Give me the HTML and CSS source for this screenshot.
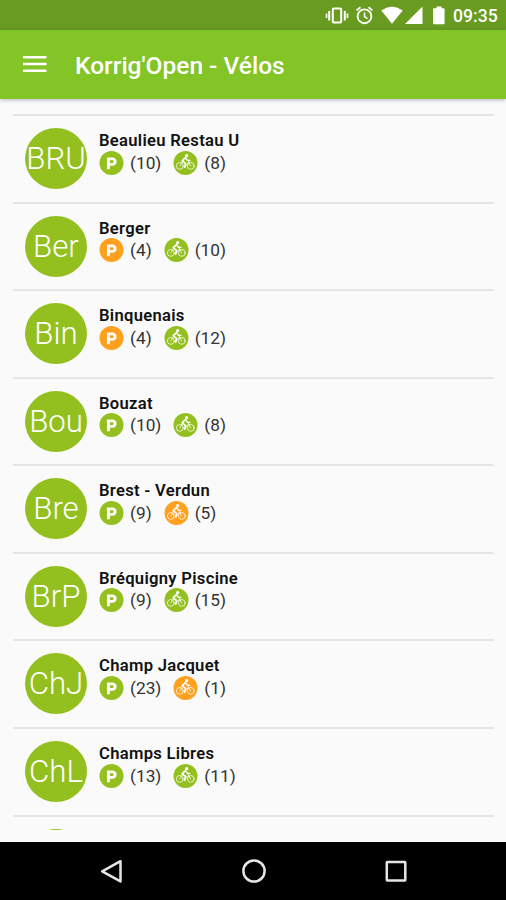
FILE: index.html
```html
<!DOCTYPE html>
<html lang="fr">
<head>
<meta charset="utf-8">
<title>Korrig'Open - Vélos</title>
<link rel="stylesheet" href="styles.css">
</head>
<body>
<svg class="defs" width="0" height="0" aria-hidden="true">
  <symbol id="parking" viewBox="0 0 24 24">
    <circle cx="12" cy="12" r="12"/>
    <path d="M8.900 18.200V7.900h4a2.750 2.750 0 0 1 0 5.500H8.900" fill="none" stroke="#fff" stroke-width="2.900"/>
  </symbol>
  <symbol id="bike" viewBox="0 0 24 24">
    <circle cx="12" cy="12" r="12"/>
    <g fill="none" stroke="#fff" stroke-linecap="round" stroke-linejoin="round">
      <circle cx="6.300" cy="14.900" r="3.400" stroke-width=".9" stroke-opacity=".85"/>
      <circle cx="17.300" cy="14.900" r="3.400" stroke-width=".9" stroke-opacity=".85"/>
      <path d="M11.800 6.700 8.700 9.900l3.300 2.500-.8 3.700" stroke-width="1.700"/>
      <path d="m12.200 7 1.900 2.400h2.300" stroke-width="1.300"/>
      <path d="m6.300 14.900 2.200-3.600m2.700 4.700 3.600-4.700m.1-1.300 2.100 4.900" stroke-width=".8"/>
    </g>
    <circle cx="13.200" cy="4.700" r="1.600" fill="#fff"/>
  </symbol>
</svg>
<div class="screen">
  <div class="status">
    <svg class="status-icons" width="126" height="30" viewBox="0 0 126 30">
      <g fill="none" stroke="#fff">
        <rect x="7.800" y="8.500" width="8.400" height="14" rx="1" stroke-width="2"/>
        <path d="M4.200 11v9.500M19.800 11v9.500" stroke-width="2"/>
        <path d="M1.500 13.500v4.500M22.500 13.500v4.500" stroke-width="1.600"/>
        <circle cx="39.500" cy="16.300" r="6.900" stroke-width="1.900"/>
        <path d="M39.500 12.400v4.300l3 1.900" stroke-width="1.500"/>
        <path d="m31.500 10.400 4-3.200M47.500 10.400l-4-3.200" stroke-width="1.800"/>
      </g>
      <g fill="#fff">
        <path d="M56.300 10.600Q67 2.800 77.700 10.600L67 23.800Z"/>
        <path d="M97.500 6.500v17.500H80Z"/>
        <path d="M109.100 8.200h2.500V6.500h5v1.700h2.200q.8 0 .8.800v14.200q0 1-1 1h-9.600q-1 0-1-1V9q0-.8 1.100-.8Z"/>
      </g>
    </svg>
    <span class="clock">09:35</span>
  </div>
  <header class="toolbar">
    <svg class="menu" width="24" height="18" viewBox="0 0 24 18"><path d="M0 2.200h23.500M0 9h23.500M0 15.800h23.500" stroke="#fff" stroke-width="2.500"/></svg>
    <h1>Korrig'Open - Vélos</h1>
  </header>
  <main class="list" id="list"></main>
  <nav class="navbar">
    <svg width="24" height="26" viewBox="0 0 24 26"><path d="M20.500 3.200v20.200L2.200 13.300Z"/></svg>
    <svg width="26" height="26" viewBox="0 0 26 26"><circle cx="13" cy="13" r="10.600"/></svg>
    <svg width="24" height="26" viewBox="0 0 24 26"><rect x="2.800" y="3.900" width="18.500" height="18.500" rx=".5"/></svg>
  </nav>
</div>
<script src="app.js"></script>
</body>
</html>
```
FILE: styles.css
```css
* { box-sizing: border-box; }
body { margin: 0; background: #fafafa; font-family: Roboto, sans-serif; }
.defs { display: block; width: 0; height: 0; }
.screen { width: 506px; height: 900px; display: flex; flex-direction: column; overflow: hidden; }
.status { height: 30px; flex: none; display: flex; justify-content: flex-end; align-items: center; padding-right: 9px; gap: 2px; background: #689b1f; color: #fff; }
.clock { width: 44px; font-size: 17.600px; line-height: 30px; font-weight: 500; padding-top: 2px; white-space: nowrap; }
.toolbar { height: 69px; flex: none; display: flex; align-items: center; gap: 28px; padding: 2px 23px 0; background: #83c427; color: #fff; box-shadow: 0 1px 4px rgba(60, 60, 90, .35); }
.menu { display: block; margin-bottom: 3px; }
.toolbar h1 { margin: 0; font-size: 24.500px; font-weight: 500; line-height: 32px; white-space: nowrap; }
.list { height: 716px; flex: none; margin-top: 15px; margin-bottom: 12px; padding: 0 12px 0 13px; overflow: hidden; }
.row { height: 87.580px; display: flex; gap: 12px; padding: 12px 0 0 12px; border-top: 2px solid #e4e4e4; }
.avatar { width: 62px; height: 61px; flex: none; border-radius: 50%; background: #93c01f; color: #fff; font-size: 31.200px; font-weight: 300; line-height: 61px; display: flex; justify-content: center; white-space: nowrap; }
.details { padding-top: 3px; }
.name { font-size: 16.600px; line-height: 20px; font-weight: 600; letter-spacing: .3px; color: #111; white-space: nowrap; }
.counts { display: flex; align-items: center; height: 24px; font-size: 17.300px; color: #333; line-height: 22px; padding-bottom: 1px; }
.count { display: flex; align-items: center; gap: 6px; margin-right: 12px; white-space: nowrap; }
.badge { width: 25px; height: 24px; fill: #93c01f; }
.low { fill: #ffa01e; }
.navbar { height: 58px; flex: none; display: flex; align-items: center; justify-content: space-between; padding: 0 98px 0 100px; background: #000; }
.navbar svg { fill: none; stroke: #e6e6e6; stroke-width: 2.500; stroke-linejoin: round; }
```
FILE: app.js
```js
const stations = [
  ["BRU", "Beaulieu Restau U", 10, 8],
  ["Ber", "Berger", 4, 10],
  ["Bin", "Binquenais", 4, 12],
  ["Bou", "Bouzat", 10, 8],
  ["Bre", "Brest - Verdun", 9, 5],
  ["BrP", "Bréquigny Piscine", 9, 15],
  ["ChJ", "Champ Jacquet", 23, 1],
  ["ChL", "Champs Libres", 13, 11]
];
const count = (icon, n) =>
  `<span class="count"><svg class="badge${n <= 5 ? " low" : ""}"><use href="#${icon}"/></svg>(${n})</span>`;
document.getElementById("list").innerHTML = stations.map(([code, name, slots, bikes]) =>
  `<div class="row"><div class="avatar">${code}</div><div class="details"><div class="name">${name}</div>` +
  `<div class="counts">${count("parking", slots)}${count("bike", bikes)}</div></div></div>`
).join("") + '<div class="row"><div class="avatar"></div></div>';
```
